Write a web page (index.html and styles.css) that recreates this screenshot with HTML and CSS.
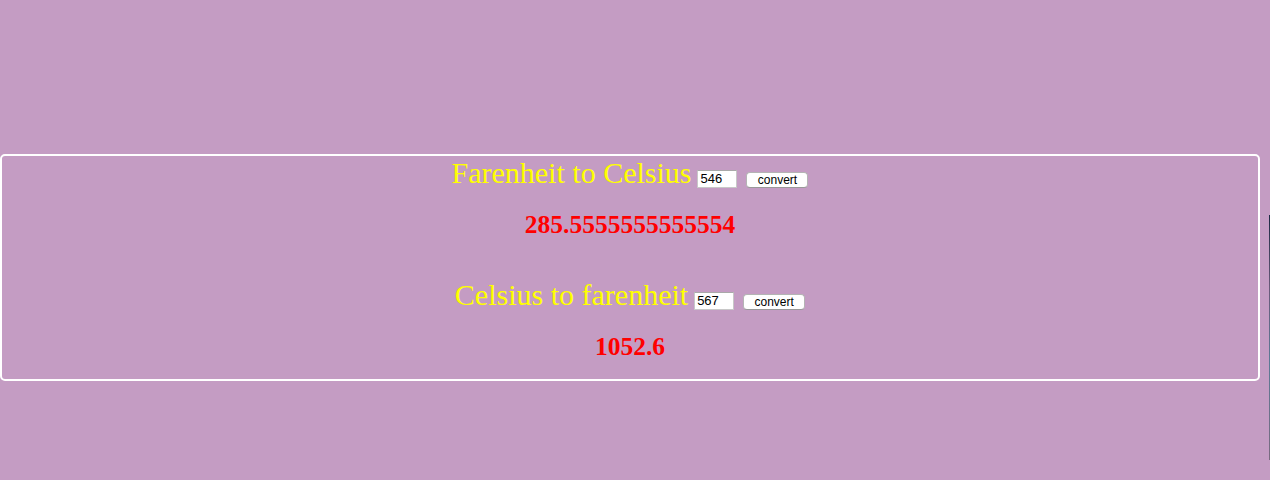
FILE: index.html
```html
<!DOCTYPE html>
<html>
<head>
<meta charset="utf-8">
<title>Temperature converter</title>
<link rel="stylesheet" href="styles.css">
</head>
<body>
<div class="panel">
  <div class="row">
    <span class="title">Farenheit to Celsius</span>
    <input class="num" type="text" value="546">
    <button class="btn">convert</button>
  </div>
  <div class="result">285.5555555555554</div>
  <div class="row row-second">
    <span class="title">Celsius to farenheit</span>
    <input class="num" type="text" value="567">
    <button class="btn">convert</button>
  </div>
  <div class="result">1052.6</div>
</div>
<div class="edge"></div>
</body>
</html>
```
FILE: styles.css
```css
html, body {
  margin: 0;
  padding: 0;
}
body {
  background: #c49cc3;
  height: 480px;
  overflow: hidden;
  font-family: "Liberation Serif", "Times New Roman", serif;
}
.panel {
  box-sizing: border-box;
  width: 1260px;
  margin-top: 154px;
  border: 2px solid #ffffff;
  border-radius: 5px;
  padding: 1px 0 17px 0;
  display: flex;
  flex-direction: column;
  align-items: center;
}
.row {
  display: flex;
  align-items: baseline;
  justify-content: center;
  height: 32px;
  line-height: 32px;
}
.row-second {
  margin-top: 39px;
}
.title {
  font-size: 30px;
  color: #ffff00;
}
.num {
  box-sizing: border-box;
  width: 40px;
  height: 18px;
  margin: 0 0 0 6px;
  padding: 0 2px;
  border: 1px solid #c8c8c8;
  border-top-color: #a9a9a9;
  background: #ffffff;
  font-family: "Liberation Sans", Arial, sans-serif;
  font-size: 13px;
  line-height: 16px;
  color: #000;
  outline: none;
}
.btn {
  box-sizing: border-box;
  width: 62px;
  height: 16px;
  margin: 0 0 0 9px;
  padding: 0;
  border: 1px solid #b4b4b4;
  border-bottom-color: #999999;
  border-radius: 4px;
  background: #ffffff;
  font-family: "Liberation Sans", Arial, sans-serif;
  font-size: 12px;
  line-height: 14px;
  color: #000;
  position: relative;
  top: 1px;
}
.result {
  margin-top: 21px;
  font-size: 25.5px;
  line-height: 30px;
  font-weight: bold;
  color: #ff0000;
  text-align: center;
}
.edge {
  position: fixed;
  right: 0;
  top: 215px;
  width: 1px;
  height: 245px;
  background: linear-gradient(#1c2a44, #6a5a7a 30%, #5c7a96 60%, #7a6a80);
}
```
